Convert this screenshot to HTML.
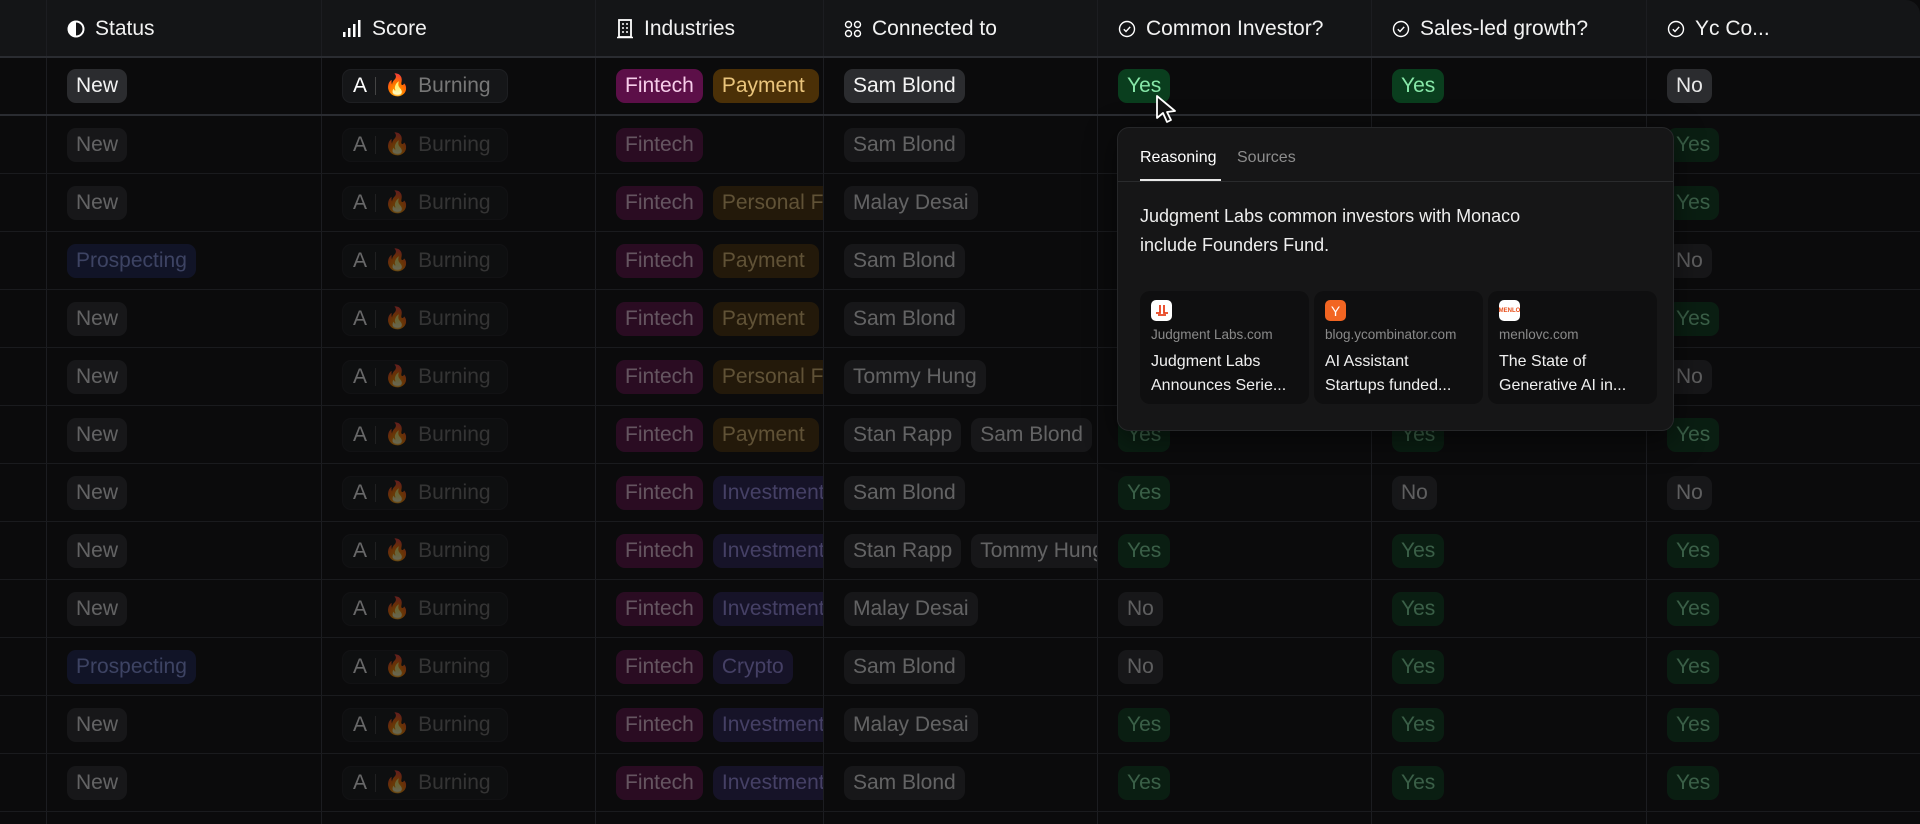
<!DOCTYPE html>
<html><head><meta charset="utf-8"><style>
*{box-sizing:border-box;margin:0;padding:0}
html,body{width:1920px;height:824px;overflow:hidden}
body{background:#0b0b0c;font-family:"Liberation Sans",sans-serif;color:#eee;position:relative}
.hdr{position:absolute;left:0;top:0;width:1920px;height:58px;background:#141517;border-bottom:2px solid #2a2c31;border-top-right-radius:14px}
.row{position:absolute;left:0;width:1920px;height:58px;border-bottom:1px solid #1a1b1e}
.c{position:absolute;top:0;height:100%;overflow:hidden;white-space:nowrap;display:flex;align-items:center;padding-left:20px;gap:10px;border-left:1px solid #1c1d21}
.hdr .c{font-size:21px;color:#f2f2f2;gap:10px;padding-left:20px;padding-top:2px}
.k{display:inline-block;height:34px;line-height:34px;padding:0 9px;border-radius:9px;font-size:21px;flex:none}
.g{background:#2b2c2f;color:#f3f3f3}
.f{background:#5c0f48;color:#f7cdea}
.p{background:#4b3007;color:#eac57c;padding-right:14px}
.pf{background:#4b3007;color:#eac57c}
.iv{background:#282257;color:#a496f5}
.cr{background:#282257;color:#a496f5}
.y{background:#0a3e1e;color:#86e7a8}
.n{background:#2b2c2f;color:#e8e8e8}
.pr{background:#1c2554;color:#8f9ff0}
.s{background:#151618;border:1px solid #1e1f22;color:#777;display:flex;align-items:center;gap:8px;padding:0 16px 0 10px}
.s b{color:#fff;font-weight:normal}
.s i{display:inline-block;width:1px;height:18px;background:#444}
.dim .k{opacity:.38}
.c0{left:0;width:46px;border-left:none}
.c1{left:46px;width:275px}.c2{left:321px;width:274px}.c3{left:595px;width:228px}.c4{left:823px;width:274px}.c5{left:1097px;width:274px}.c6{left:1371px;width:275px}.c7{left:1646px;width:274px}
.pop{position:absolute;left:1117px;top:127px;width:557px;height:304px;background:#161617;border:1px solid #262729;border-radius:12px;box-shadow:0 8px 30px rgba(0,0,0,.5)}
.tabs{height:54px;border-bottom:1px solid #2a2b2d;position:relative}
.tab{position:absolute;top:21px;font-size:16px}
.card{position:absolute;top:163px;width:169px;height:113px;background:#0f0f10;border-radius:10px;padding:9px 11px}
.ic{width:21px;height:21px;border-radius:5px;margin-bottom:6px;display:flex;align-items:center;justify-content:center;font-size:14px}
.dom{font-size:13.5px;color:#8a8a8a;margin-bottom:8px}
.tt{font-size:16px;color:#f0f0f0;line-height:24px}
</style></head><body>
<div class="hdr">
<div class="c c0"></div>
<div class="c c1"><svg width="18" height="18" viewBox="0 0 18 18"><circle cx="9" cy="9" r="7.5" fill="none" stroke="#fff" stroke-width="2"/><path d="M9 1.5a7.5 7.5 0 0 0 0 15z" fill="#fff"/></svg>Status</div>
<div class="c c2"><svg width="20" height="18" viewBox="0 0 20 18"><rect x="1" y="12" width="2.5" height="5" fill="#fff"/><rect x="6" y="8" width="2.5" height="9" fill="#fff"/><rect x="11" y="4" width="2.5" height="13" fill="#fff"/><rect x="16" y="0" width="2.5" height="17" fill="#fff"/></svg>Score</div>
<div class="c c3"><svg width="18" height="20" viewBox="0 0 18 20"><rect x="3" y="1" width="12" height="17" fill="none" stroke="#fff" stroke-width="1.8"/><path d="M1 18.5h16M6 5h2M10 5h2M6 9h2M10 9h2M6 13h2M10 13h2" stroke="#fff" stroke-width="1.6"/></svg>Industries</div>
<div class="c c4"><svg width="18" height="18" viewBox="0 0 18 18" fill="none" stroke="#fff" stroke-width="1.4"><circle cx="4.5" cy="4.5" r="3"/><circle cx="13.5" cy="4.5" r="3"/><circle cx="4.5" cy="13.5" r="3"/><circle cx="13.5" cy="13.5" r="3"/></svg>Connected to</div>
<div class="c c5"><svg width="18" height="18" viewBox="0 0 18 18" fill="none" stroke="#fff" stroke-width="1.4"><circle cx="9" cy="9" r="7.5"/><path d="M5.8 9.3l2.2 2.2 4.2-4.6"/></svg>Common Investor?</div>
<div class="c c6"><svg width="18" height="18" viewBox="0 0 18 18" fill="none" stroke="#fff" stroke-width="1.4"><circle cx="9" cy="9" r="7.5"/><path d="M5.8 9.3l2.2 2.2 4.2-4.6"/></svg>Sales-led growth?</div>
<div class="c c7"><svg width="18" height="18" viewBox="0 0 18 18" fill="none" stroke="#fff" stroke-width="1.4"><circle cx="9" cy="9" r="7.5"/><path d="M5.8 9.3l2.2 2.2 4.2-4.6"/></svg>Yc Co...</div>
</div>

<div class="row" style="top:58px;border-bottom:2px solid #2a2c31"><div class="c c0"></div><div class="c c1"><span class="k g">New</span></div><div class="c c2"><span class="k s"><b>A</b><i></i><span style="color:#ff7a1a">🔥</span>Burning</span></div><div class="c c3"><span class="k f">Fintech</span><span class="k p">Payment</span></div><div class="c c4"><span class="k g">Sam Blond</span></div><div class="c c5"><span class="k y">Yes</span></div><div class="c c6"><span class="k y">Yes</span></div><div class="c c7"><span class="k n">No</span></div></div>

<div class="row dim" style="top:116px"><div class="c c0"></div><div class="c c1"><span class="k g">New</span></div><div class="c c2"><span class="k s"><b>A</b><i></i><span style="color:#ff7a1a">🔥</span>Burning</span></div><div class="c c3"><span class="k f">Fintech</span></div><div class="c c4"><span class="k g">Sam Blond</span></div><div class="c c5"><span class="k y">Yes</span></div><div class="c c6"><span class="k y">Yes</span></div><div class="c c7"><span class="k y">Yes</span></div></div>
<div class="row dim" style="top:174px"><div class="c c0"></div><div class="c c1"><span class="k g">New</span></div><div class="c c2"><span class="k s"><b>A</b><i></i><span style="color:#ff7a1a">🔥</span>Burning</span></div><div class="c c3"><span class="k f">Fintech</span><span class="k pf">Personal Finance</span></div><div class="c c4"><span class="k g">Malay Desai</span></div><div class="c c5"><span class="k y">Yes</span></div><div class="c c6"><span class="k y">Yes</span></div><div class="c c7"><span class="k y">Yes</span></div></div>
<div class="row dim" style="top:232px"><div class="c c0"></div><div class="c c1"><span class="k pr">Prospecting</span></div><div class="c c2"><span class="k s"><b>A</b><i></i><span style="color:#ff7a1a">🔥</span>Burning</span></div><div class="c c3"><span class="k f">Fintech</span><span class="k p">Payment</span></div><div class="c c4"><span class="k g">Sam Blond</span></div><div class="c c5"><span class="k y">Yes</span></div><div class="c c6"><span class="k y">Yes</span></div><div class="c c7"><span class="k n">No</span></div></div>
<div class="row dim" style="top:290px"><div class="c c0"></div><div class="c c1"><span class="k g">New</span></div><div class="c c2"><span class="k s"><b>A</b><i></i><span style="color:#ff7a1a">🔥</span>Burning</span></div><div class="c c3"><span class="k f">Fintech</span><span class="k p">Payment</span></div><div class="c c4"><span class="k g">Sam Blond</span></div><div class="c c5"><span class="k y">Yes</span></div><div class="c c6"><span class="k y">Yes</span></div><div class="c c7"><span class="k y">Yes</span></div></div>
<div class="row dim" style="top:348px"><div class="c c0"></div><div class="c c1"><span class="k g">New</span></div><div class="c c2"><span class="k s"><b>A</b><i></i><span style="color:#ff7a1a">🔥</span>Burning</span></div><div class="c c3"><span class="k f">Fintech</span><span class="k pf">Personal Finance</span></div><div class="c c4"><span class="k g">Tommy Hung</span></div><div class="c c5"><span class="k y">Yes</span></div><div class="c c6"><span class="k y">Yes</span></div><div class="c c7"><span class="k n">No</span></div></div>
<div class="row dim" style="top:406px"><div class="c c0"></div><div class="c c1"><span class="k g">New</span></div><div class="c c2"><span class="k s"><b>A</b><i></i><span style="color:#ff7a1a">🔥</span>Burning</span></div><div class="c c3"><span class="k f">Fintech</span><span class="k p">Payment</span></div><div class="c c4"><span class="k g">Stan Rapp</span><span class="k g">Sam Blond</span></div><div class="c c5"><span class="k y">Yes</span></div><div class="c c6"><span class="k y">Yes</span></div><div class="c c7"><span class="k y">Yes</span></div></div>
<div class="row dim" style="top:464px"><div class="c c0"></div><div class="c c1"><span class="k g">New</span></div><div class="c c2"><span class="k s"><b>A</b><i></i><span style="color:#ff7a1a">🔥</span>Burning</span></div><div class="c c3"><span class="k f">Fintech</span><span class="k iv">Investment</span></div><div class="c c4"><span class="k g">Sam Blond</span></div><div class="c c5"><span class="k y">Yes</span></div><div class="c c6"><span class="k n">No</span></div><div class="c c7"><span class="k n">No</span></div></div>
<div class="row dim" style="top:522px"><div class="c c0"></div><div class="c c1"><span class="k g">New</span></div><div class="c c2"><span class="k s"><b>A</b><i></i><span style="color:#ff7a1a">🔥</span>Burning</span></div><div class="c c3"><span class="k f">Fintech</span><span class="k iv">Investment</span></div><div class="c c4"><span class="k g">Stan Rapp</span><span class="k g">Tommy Hung</span></div><div class="c c5"><span class="k y">Yes</span></div><div class="c c6"><span class="k y">Yes</span></div><div class="c c7"><span class="k y">Yes</span></div></div>
<div class="row dim" style="top:580px"><div class="c c0"></div><div class="c c1"><span class="k g">New</span></div><div class="c c2"><span class="k s"><b>A</b><i></i><span style="color:#ff7a1a">🔥</span>Burning</span></div><div class="c c3"><span class="k f">Fintech</span><span class="k iv">Investment</span></div><div class="c c4"><span class="k g">Malay Desai</span></div><div class="c c5"><span class="k n">No</span></div><div class="c c6"><span class="k y">Yes</span></div><div class="c c7"><span class="k y">Yes</span></div></div>
<div class="row dim" style="top:638px"><div class="c c0"></div><div class="c c1"><span class="k pr">Prospecting</span></div><div class="c c2"><span class="k s"><b>A</b><i></i><span style="color:#ff7a1a">🔥</span>Burning</span></div><div class="c c3"><span class="k f">Fintech</span><span class="k cr">Crypto</span></div><div class="c c4"><span class="k g">Sam Blond</span></div><div class="c c5"><span class="k n">No</span></div><div class="c c6"><span class="k y">Yes</span></div><div class="c c7"><span class="k y">Yes</span></div></div>
<div class="row dim" style="top:696px"><div class="c c0"></div><div class="c c1"><span class="k g">New</span></div><div class="c c2"><span class="k s"><b>A</b><i></i><span style="color:#ff7a1a">🔥</span>Burning</span></div><div class="c c3"><span class="k f">Fintech</span><span class="k iv">Investment</span></div><div class="c c4"><span class="k g">Malay Desai</span></div><div class="c c5"><span class="k y">Yes</span></div><div class="c c6"><span class="k y">Yes</span></div><div class="c c7"><span class="k y">Yes</span></div></div>
<div class="row dim" style="top:754px"><div class="c c0"></div><div class="c c1"><span class="k g">New</span></div><div class="c c2"><span class="k s"><b>A</b><i></i><span style="color:#ff7a1a">🔥</span>Burning</span></div><div class="c c3"><span class="k f">Fintech</span><span class="k iv">Investment</span></div><div class="c c4"><span class="k g">Sam Blond</span></div><div class="c c5"><span class="k y">Yes</span></div><div class="c c6"><span class="k y">Yes</span></div><div class="c c7"><span class="k y">Yes</span></div></div>
<div class="row dim" style="top:812px;height:12px;border-bottom:none"><div class="c c0"></div><div class="c c1"></div><div class="c c2"></div><div class="c c3"></div><div class="c c4"></div><div class="c c5"></div><div class="c c6"></div><div class="c c7"></div></div>

<div class="pop">
<div class="tabs"><span class="tab" style="left:22px;color:#fff">Reasoning</span><span class="tab" style="left:119px;color:#8d8d8d">Sources</span><div style="position:absolute;left:22px;top:51px;width:81px;height:2px;background:#e8e8e8"></div></div>
<div style="position:absolute;left:22px;top:74px;font-size:18px;line-height:29px;color:#eee">Judgment Labs common investors with Monaco<br>include Founders Fund.</div>
<div class="card" style="left:22px"><div class="ic" style="background:#fff"><svg width="14" height="12" viewBox="0 0 14 12"><path d="M5 0v8H1M9 0v8h4M3 10h8" stroke="#e8401c" stroke-width="1.8" fill="none"/></svg></div><div class="dom">Judgment Labs.com</div><div class="tt">Judgment Labs<br>Announces Serie...</div></div>
<div class="card" style="left:196px"><div class="ic" style="background:#f26522;color:#fff">Y</div><div class="dom">blog.ycombinator.com</div><div class="tt">AI Assistant<br>Startups funded...</div></div>
<div class="card" style="left:370px"><div class="ic" style="background:#fff;color:#e8501c;font-size:6px;font-weight:bold">MENLO</div><div class="dom">menlovc.com</div><div class="tt">The State of<br>Generative AI in...</div></div>
</div>

<svg style="position:absolute;left:1155px;top:94px" width="24" height="30" viewBox="0 0 24 30"><path d="M2 2l0 22 6-5 4 9 4-2-4-8 8-1z" fill="#111" stroke="#fff" stroke-width="1.8" stroke-linejoin="round"/></svg>
</body></html>
